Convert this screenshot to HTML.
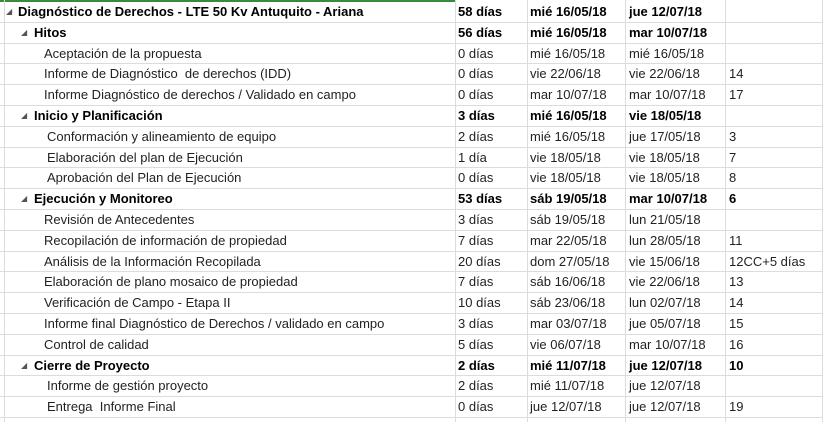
<!DOCTYPE html><html><head><meta charset="utf-8"><style>
body{margin:0;width:827px;height:422px;background:#fff;overflow:hidden;position:relative;font-family:"Liberation Sans",sans-serif;font-size:13px;color:#222}
.r{position:absolute;left:0;width:822px;height:20.8px;border-bottom:1px solid #dcdcdc;box-sizing:border-box}
.c{position:absolute;top:2px;white-space:pre}
.b{font-weight:bold;color:#000}
.t{font-size:8px;color:#555;position:absolute;top:5px}
.v{position:absolute;top:0;width:1px;height:422px;background:#dcdcdc}
</style></head><body>
<div style="position:absolute;left:0;top:0;width:455px;height:2px;background:#3a8a3a"></div>
<div class="v" style="left:4px"></div><div class="v" style="left:455px"></div><div class="v" style="left:527px"></div><div class="v" style="left:625px"></div><div class="v" style="left:725px"></div><div class="v" style="left:822px"></div>
<div id="g"></div>
<script>
var d=[
[0,1,"Diagnóstico de Derechos - LTE 50 Kv Antuquito - Ariana","58 días","mié 16/05/18","jue 12/07/18",""],
[1,1,"Hitos","56 días","mié 16/05/18","mar 10/07/18",""],
[2,0,"Aceptación de la propuesta","0 días","mié 16/05/18","mié 16/05/18",""],
[2,0,"Informe de Diagnóstico  de derechos (IDD)","0 días","vie 22/06/18","vie 22/06/18","14"],
[2,0,"Informe Diagnóstico de derechos / Validado en campo","0 días","mar 10/07/18","mar 10/07/18","17"],
[1,1,"Inicio y Planificación","3 días","mié 16/05/18","vie 18/05/18",""],
[3,0,"Conformación y alineamiento de equipo","2 días","mié 16/05/18","jue 17/05/18","3"],
[3,0,"Elaboración del plan de Ejecución","1 día","vie 18/05/18","vie 18/05/18","7"],
[3,0,"Aprobación del Plan de Ejecución","0 días","vie 18/05/18","vie 18/05/18","8"],
[1,1,"Ejecución y Monitoreo","53 días","sáb 19/05/18","mar 10/07/18","6"],
[2,0,"Revisión de Antecedentes","3 días","sáb 19/05/18","lun 21/05/18",""],
[2,0,"Recopilación de información de propiedad","7 días","mar 22/05/18","lun 28/05/18","11"],
[2,0,"Análisis de la Información Recopilada","20 días","dom 27/05/18","vie 15/06/18","12CC+5 días"],
[2,0,"Elaboración de plano mosaico de propiedad","7 días","sáb 16/06/18","vie 22/06/18","13"],
[2,0,"Verificación de Campo - Etapa II","10 días","sáb 23/06/18","lun 02/07/18","14"],
[2,0,"Informe final Diagnóstico de Derechos / validado en campo","3 días","mar 03/07/18","jue 05/07/18","15"],
[2,0,"Control de calidad","5 días","vie 06/07/18","mar 10/07/18","16"],
[1,1,"Cierre de Proyecto","2 días","mié 11/07/18","jue 12/07/18","10"],
[3,0,"Informe de gestión proyecto","2 días","mié 11/07/18","jue 12/07/18",""],
[3,0,"Entrega  Informe Final","0 días","jue 12/07/18","jue 12/07/18","19"]];
var h="";var ind=[18,34,44,47];
d.forEach(function(x,i){var top=2+i*20.8;var b=x[1]?' b':'';
h+='<div class="r" style="top:'+top+'px">';
if(x[0]<2)h+='<span class="t" style="left:'+(x[0]?21:6)+'px">◢</span>';
h+='<span class="c'+b+'" style="left:'+ind[x[0]]+'px">'+x[2]+'</span>';
h+='<span class="c'+b+'" style="left:458px">'+x[3]+'</span>';
h+='<span class="c'+b+'" style="left:530px">'+x[4]+'</span>';
h+='<span class="c'+b+'" style="left:629px">'+x[5]+'</span>';
h+='<span class="c'+b+'" style="left:729px">'+x[6]+'</span></div>';});
document.getElementById("g").innerHTML=h;
</script>
</body></html>
